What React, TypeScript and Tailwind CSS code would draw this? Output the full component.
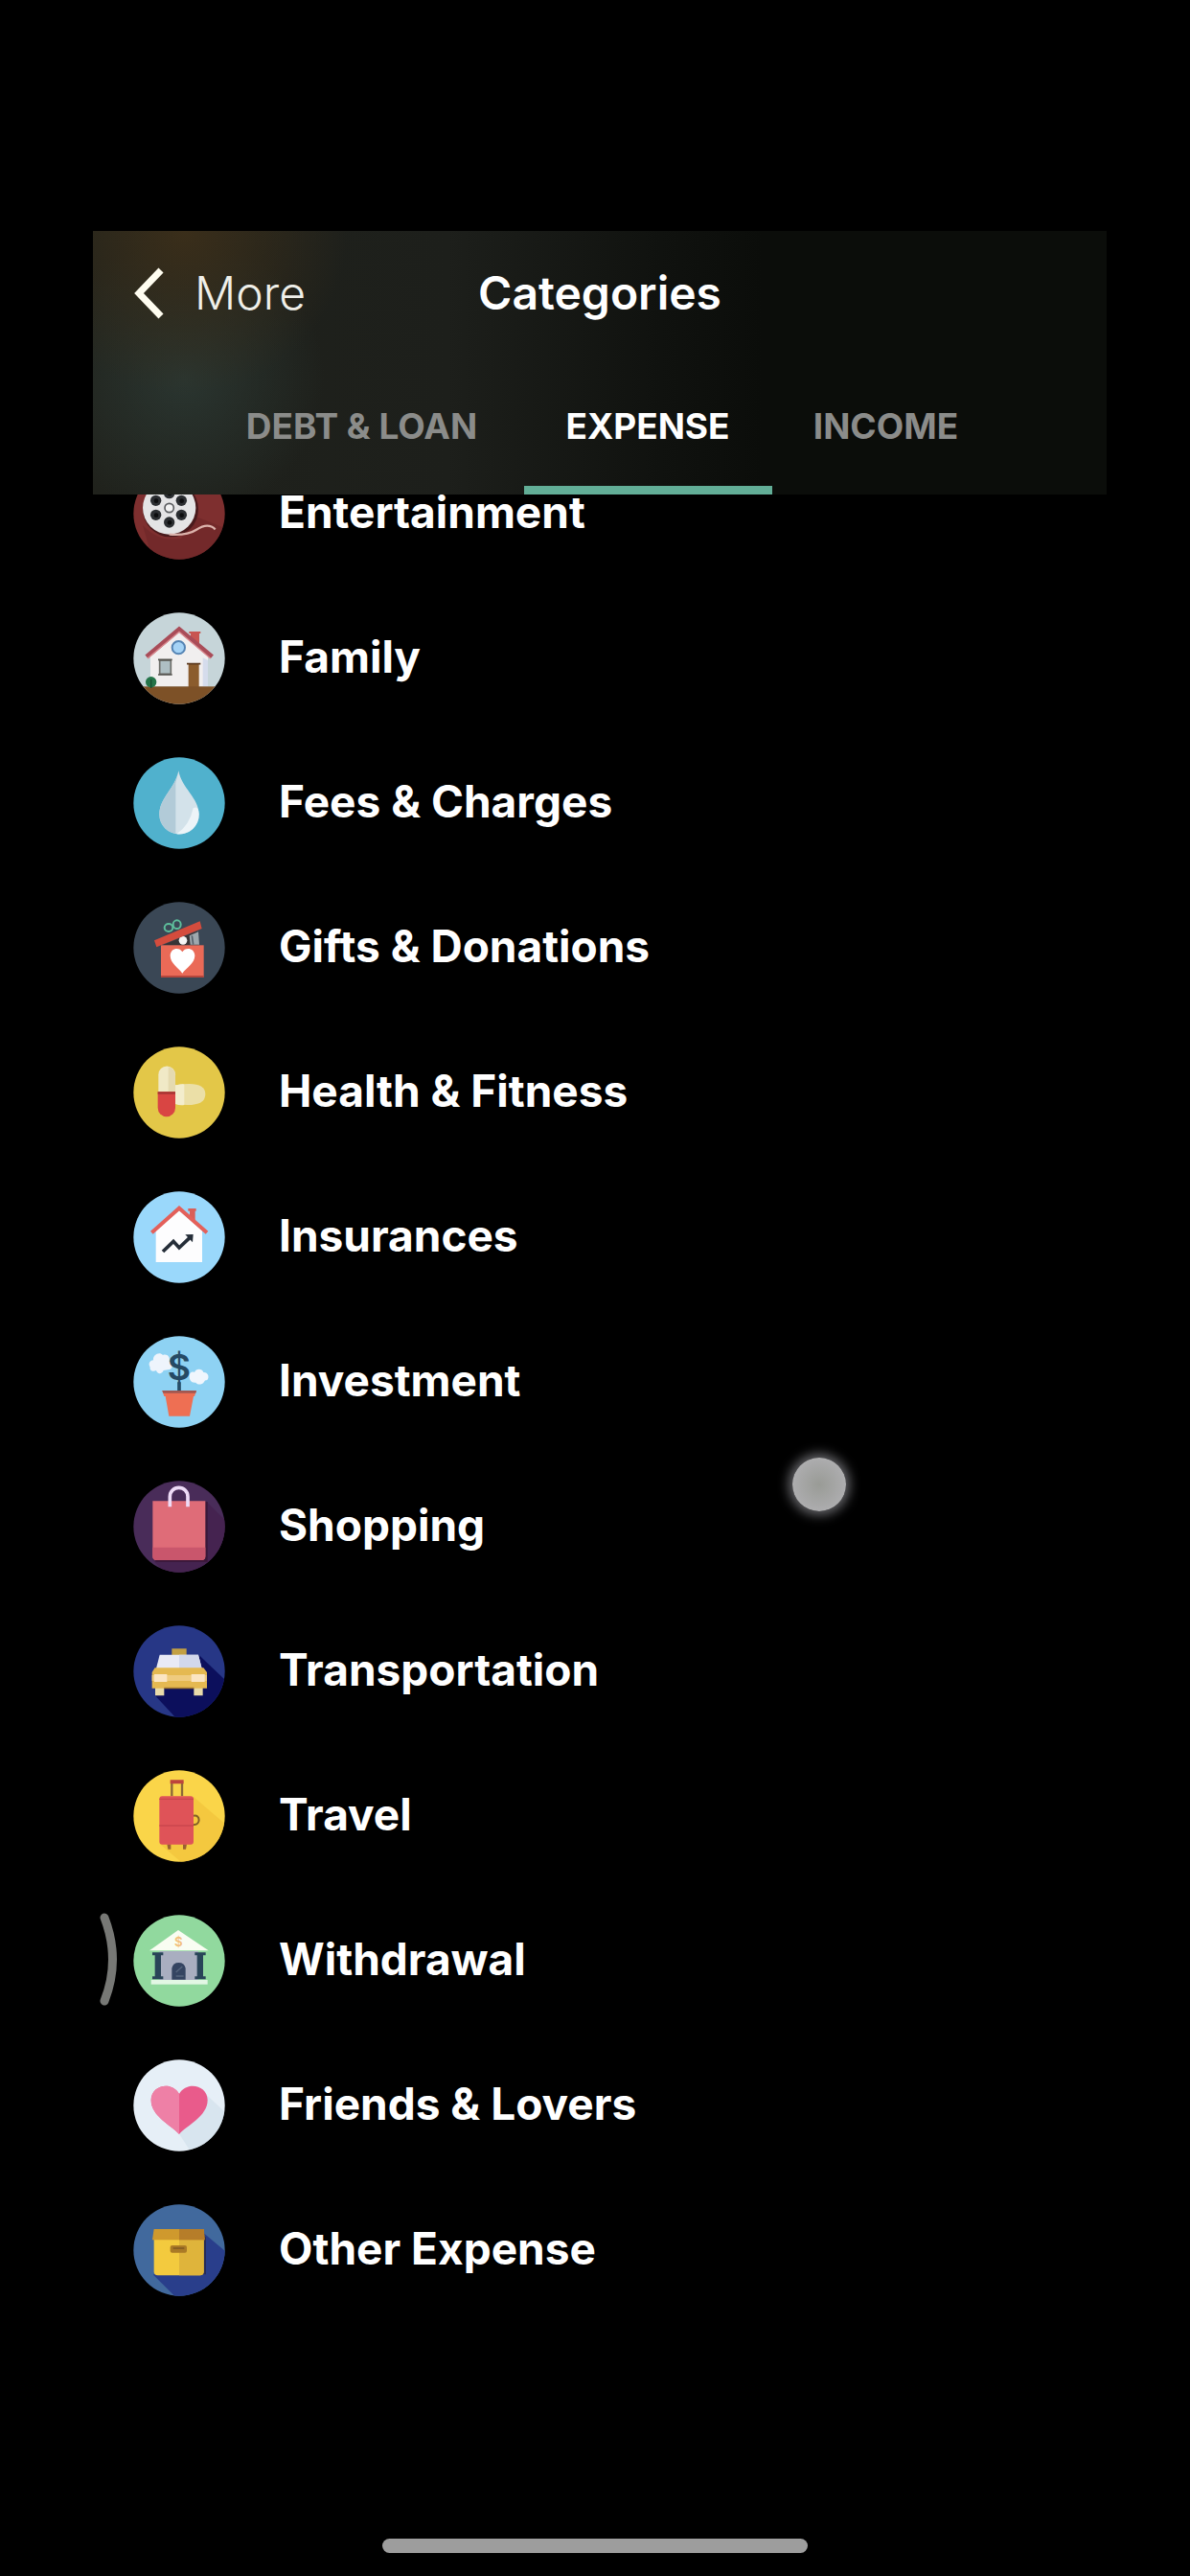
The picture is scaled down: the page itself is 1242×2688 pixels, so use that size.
import type { ReactNode } from "react";

type Category = { name: string; icon: ReactNode; edgeHint?: boolean };

function Badge({ id, bg, children }: { id: string; bg: string; children: ReactNode }) {
  return (
    <svg viewBox="0 0 288 288" className="size-24 shrink-0" aria-hidden="true">
      <clipPath id={id}>
        <circle cx="144" cy="144" r="143" />
      </clipPath>
      <g clipPath={`url(#${id})`}>
        <rect width="288" height="288" fill={bg} />
        {children}
      </g>
    </svg>
  );
}

const reelHoles = [
  [71, 103],
  [151, 103],
  [71, 148],
  [151, 148],
  [113, 171],
  [113, 80],
];

const categories: Category[] = [
  {
    name: "Entertainment",
    icon: (
      <Badge id="c-ent" bg="#7e2f2f">
        <path d="M30 180Q80 235 150 222L190 150L288 190V288H60Z" fill="#6d2728" opacity=".6" />
        <circle cx="117" cy="130" r="87" fill="#4a1a1c" />
        <circle cx="113" cy="126" r="83" fill="#e4e4e5" />
        <path d="M113 209C150 212 178 207 198 194S240 176 257 193" fill="none" stroke="#dcb3ac" strokeWidth="7" />
        {reelHoles.map(([x, y]) => (
          <g key={`${x}-${y}`}>
            <circle cx={x} cy={y} r="17" fill="#2b2e31" />
            <circle cx={x + 1} cy={y + 1} r="7" fill="#0c0d0e" />
          </g>
        ))}
        <circle cx="113" cy="126" r="14" fill="#f3f3f3" stroke="#5b5d60" strokeWidth="5" />
      </Badge>
    ),
  },
  {
    name: "Family",
    icon: (
      <Badge id="c-fam" bg="#c6d5d9">
        <path d="M180 108V66h-5v-6h36v6h-4v66z" fill="#c85551" />
        <path d="M54 232V130L144 54l90 78v100z" fill="#f1efef" />
        <path d="M234 150v82h-16v-90z" fill="#d5dcec" />
        <path d="M42 139 144 53l103 86" fill="none" stroke="#a94c58" strokeWidth="15" />
        <path d="M45 144 144 61l98 83" fill="none" stroke="#d98b90" strokeWidth="4" />
        <circle cx="142" cy="110" r="20" fill="#a5d3f6" stroke="#5584b4" strokeWidth="6" />
        <rect x="83" y="150" width="35" height="43" fill="#aebfc3" stroke="#6c6d68" strokeWidth="5" />
        <path d="M78 148h44M78 195h44" stroke="#54544f" strokeWidth="5" />
        <rect x="173" y="162" width="33" height="72" fill="#8b5c2d" />
        <path d="M168 161h43" stroke="#5d3b20" strokeWidth="5" />
        <rect y="232" width="288" height="56" fill="#7d5127" />
        <circle cx="56" cy="218" r="17" fill="#247449" />
        <path d="M56 210v27" stroke="#174d31" strokeWidth="4" />
      </Badge>
    ),
  },
  {
    name: "Fees & Charges",
    icon: (
      <Badge id="c-fee" bg="#50b1cd">
        <path d="M142 43C152 98 206 128 206 180A62 61 0 0 1 82 180C82 128 132 98 142 43Z" fill="#d3e2ea" />
        <path d="M142 43C132 98 82 128 82 180A62 61 0 0 0 133 240V82Z" fill="#b2cbd8" />
        <path d="M206 178A62 61 0 0 1 136 241Q176 215 188 160Q205 150 206 178Z" fill="#edf4f8" />
      </Badge>
    ),
  },
  {
    name: "Gifts & Donations",
    icon: (
      <Badge id="c-gift" bg="#3a4755">
        <path d="M92 136 200 92l6 44z" fill="#383436" />
        <path d="m176 106 28-12 3 40h-28z" fill="#9ea8ae" />
        <path d="m184 106 4 28" stroke="#56616b" strokeWidth="5" />
        <circle cx="156" cy="121" r="13" fill="#f5f5f5" />
        <rect x="87" y="136" width="134" height="100" fill="#ea6a57" />
        <path d="M87 234h134" stroke="#b5463c" strokeWidth="6" />
        <path d="m66 121 143-60 6 23-142 58z" fill="#d44c3d" />
        <ellipse cx="111" cy="81" rx="13" ry="12" fill="none" stroke="#5dbd9b" strokeWidth="6" />
        <ellipse cx="137" cy="71" rx="12" ry="13" fill="none" stroke="#5dbd9b" strokeWidth="6" />
        <path d="M154 224C142 207 116 193 116 169C116 144 145 140 154 157C163 140 193 144 193 169C193 193 166 207 154 224Z" fill="#fff" />
      </Badge>
    ),
  },
  {
    name: "Health & Fitness",
    icon: (
      <Badge id="c-health" bg="#e3c748">
        <path d="M132 121Q226 105 226 149T132 180Z" fill="#ebdfa7" />
        <path d="M132 121Q160 115 160 119V183Q145 185 132 180Z" fill="#f3edcc" />
        <path d="M79 142V88a26 26 0 0 1 53 0v54z" fill="#f0e9c6" />
        <path d="M110 142V64a26 26 0 0 1 22 24v54z" fill="#e5dab0" />
        <path d="M77 142h55v50a27 27 0 0 1-55 0z" fill="#d94543" />
        <path d="M77 142h55v7H77z" fill="#a93534" />
      </Badge>
    ),
  },
  {
    name: "Insurances",
    icon: (
      <Badge id="c-ins" bg="#9ad8fb">
        <path d="M177 90V62h-5v-8h25v8h-3v45z" fill="#d95f59" />
        <path d="M71 222V124l73-64 72 64v98z" fill="#fdfdfe" />
        <path d="m58 130 86-77 87 77" fill="none" stroke="#e3605a" strokeWidth="12" />
        <path d="m93 189 33-32 18 20 36-34" fill="none" stroke="#252e39" strokeWidth="11" />
        <path d="m163 136 25-1-2 25z" fill="#252e39" />
      </Badge>
    ),
  },
  {
    name: "Investment",
    icon: (
      <Badge id="c-inv" bg="#8ed2f3">
        <path d="M53 98c-8-13 2-22 10-22-2-18 20-28 30-16 14-5 24 7 20 20 14 4 12 26-4 26l-14 2c-5 13-20 12-23 0-10 6-21 0-19-10z" fill="#eef4fc" />
        <path d="M176 127c0-14 10-16 16-13 5-14 24-12 28 0 14-1 20 14 12 24-8 1-8 3-12 9-10 7-20 5-24-1-14 2-20-7-20-19z" fill="#f0f6fd" />
        <path d="M144 145v30" stroke="#264e68" strokeWidth="11" />
        <text x="144" y="139" textAnchor="middle" fontFamily="Inter, sans-serif" fontWeight="600" fontSize="112" fill="#264a64">$</text>
        <path d="M91 171h107l-6 18h-3l-12 62h-65L101 189h-4z" fill="#ee6f53" />
        <path d="M91 171h107l-2 8H94z" fill="#a25750" />
      </Badge>
    ),
  },
  {
    name: "Shopping",
    icon: (
      <Badge id="c-shop" bg="#492c59">
        <path d="m226 62 62 62v164H100L61 248z" fill="#452350" />
        <path d="M226 66h7v188H70v-8z" fill="#3a1738" />
        <path d="M61 64h165v173q0 12-12 12H73q-12 0-12-12z" fill="#df6c78" />
        <path d="M61 209h165v28q0 12-12 12H73q-12 0-12-12z" fill="#c9566c" />
        <path d="M115 82V50a28 28 0 0 1 56 0v32" fill="none" stroke="#eedbf7" strokeWidth="11" />
      </Badge>
    ),
  },
  {
    name: "Transportation",
    icon: (
      <Badge id="c-taxi" bg="#273786">
        <path d="m206 93 82 78v117H132L68 219z" fill="#0c0f5c" />
        <path d="M121 73h46v22h-46z" fill="#c3a043" />
        <path d="M83 92h121l11 43H72z" fill="#e9eaf5" />
        <path d="M144 92h60l11 43h-71z" fill="#d2d8ec" />
        <path d="M69 190h28v30H69zm121 0h28v30h-28z" fill="#e9dbaa" />
        <path d="M68 133h152l11 14v50H59v-50z" fill="#e5b951" />
        <path d="M59 156h172v18H59z" fill="#efcb7f" />
        <path d="M66 153h40v24H66zm116 0h42v24h-42z" fill="#fbe5c3" />
        <path d="M97 194h93v5H97z" fill="#a17831" />
      </Badge>
    ),
  },
  {
    name: "Travel",
    icon: (
      <Badge id="c-travel" bg="#fad549">
        <path d="m189 84 99 85v119H150l-64-55z" fill="#f1c33c" opacity=".75" />
        <path d="M121 82V38m32 44V38" stroke="#8c6738" strokeWidth="7" />
        <path d="M116 37h42" stroke="#bd443c" strokeWidth="12" />
        <path d="M189 143c22-6 23 31 0 28" fill="none" stroke="#826027" strokeWidth="6" />
        <path d="M106 232h12v16h-9zm50 0h12l-3 16h-9z" fill="#9b6031" />
        <rect x="82" y="82" width="107" height="151" rx="9" fill="#df5358" />
        <path d="M82 174h107M82 91h107" stroke="#ca474d" strokeWidth="4" />
      </Badge>
    ),
  },
  {
    name: "Withdrawal",
    edgeHint: true,
    icon: (
      <Badge id="c-bank" bg="#91d99e">
        <path d="m141 48 95 64H51z" fill="#f9fdf2" />
        <text x="142" y="99" textAnchor="middle" fontFamily="Inter, sans-serif" fontWeight="600" fontSize="40" fill="#f2bf7a">$</text>
        <rect x="82" y="114" width="122" height="90" fill="#a9aec0" />
        <path d="M60 118h34v9h-7v66h7v9H60v-9h8v-66h-8zm133 0h34v9h-8v66h8v9h-34v-9h7v-66h-7z" fill="#294458" />
        <path d="M121 203v-36a22 22 0 0 1 43 0v36z" fill="#344461" />
        <path d="m134 180 20-18m-20 30h24" stroke="#56657d" strokeWidth="4" />
        <rect x="56" y="204" width="177" height="14" fill="#e2f7e4" />
      </Badge>
    ),
  },
  {
    name: "Friends & Lovers",
    icon: (
      <Badge id="c-heart" bg="#e6eff7">
        <path d="m229 110 59 55v123H180l-36-55z" fill="#cfdde9" opacity=".6" />
        <path d="M144 234C121 207 56 179 56 127C56 80 121 66 144 108C167 66 233 80 233 127C233 179 167 207 144 234Z" fill="#e95b8b" />
        <path d="M144 234C121 207 56 179 56 127C56 80 121 66 144 108Z" fill="#ee80a6" />
      </Badge>
    ),
  },
  {
    name: "Other Expense",
    icon: (
      <Badge id="c-box" bg="#41699d">
        <path d="m223 92 65 55v141H130l-67-67z" fill="#293e8b" />
        <path d="M70 220h158V104l-8-8z" fill="#252b58" />
        <path d="M65 106h156v105q0 12-12 12H77q-12 0-12-12z" fill="#f3ca3e" />
        <path d="M144 106h77v105q0 12-12 12h-65z" fill="#dfb43b" />
        <path d="M65 78h156l3 34H60z" fill="#cf992d" />
        <path d="M144 78h77l3 34h-80z" fill="#b67d29" />
        <rect x="116" y="129" width="52" height="23" rx="6" fill="#aa7a26" />
        <path d="M125 138h35" stroke="#7e5822" strokeWidth="5" />
      </Badge>
    ),
  },
];

const tabs = ["DEBT & LOAN", "EXPENSE", "INCOME"];

export default function App() {
  return (
    <div className="relative flex min-h-screen flex-col bg-black pt-[241px] font-['Inter',sans-serif] text-white">
      <main className="mr-[87px] ml-[97px] flex flex-1 flex-col">
        <header className="bg-[radial-gradient(circle_at_9%_0%,#3a2e1a_0%,#3a2e1a00_17%),radial-gradient(circle_at_9%_56%,#2d3a35cc_0%,#2d3a3500_15%),linear-gradient(90deg,#20221c_0%,#1d1f1b_35%,#10120f_56%,#0b0d0a_66%)]">
          <div className="grid h-[130px] grid-cols-[1fr_auto_1fr] items-center">
            <button type="button" className="flex items-center gap-8 justify-self-start pl-[42px] text-[48px] leading-none font-light text-[#efefe9]">
              <svg viewBox="0 0 32 54" className="h-[54px] w-8" fill="none" stroke="#fffdf0" strokeWidth="7" aria-hidden="true">
                <path d="M29 3 6 27l23 24" />
              </svg>
              More
            </button>
            <h1 className="text-[48px] leading-none font-semibold">Categories</h1>
          </div>
          <div role="tablist" className="grid h-[145px] grid-cols-[338px_259px_238px] justify-center">
            {tabs.map((tab) => (
              <button
                key={tab}
                type="button"
                role="tab"
                aria-selected={tab === "EXPENSE"}
                className={
                  tab === "EXPENSE"
                    ? "border-b-[9px] border-[#62ae97] pt-3 text-[37px] font-bold text-white"
                    : "border-b-[9px] border-transparent pt-3 text-[37px] font-bold text-[#8b8c8a]"
                }
              >
                {tab}
              </button>
            ))}
          </div>
        </header>

        <div className="overflow-hidden">
          <ul className="-mt-14">
            {categories.map((category) => (
              <li key={category.name} className="relative">
                {category.edgeHint && (
                  <svg viewBox="0 0 24 98" className="absolute top-[26px] left-1 h-[98px] w-6" fill="none" stroke="#777875" strokeWidth="9" strokeLinecap="round" aria-hidden="true">
                    <path d="M8 5Q25 49 8 92" />
                  </svg>
                )}
                <button type="button" className="flex h-[151px] w-full items-center gap-14 pl-[42px] text-left text-[46px] leading-none font-bold">
                  {category.icon}
                  <span className="pb-1">{category.name}</span>
                </button>
              </li>
            ))}
          </ul>
        </div>
      </main>

      <div className="absolute top-[1521px] left-[827px] size-14 rounded-full bg-[radial-gradient(circle,#999b96_0%,#aaaaab_60%,#b8b8bb_100%)] shadow-[0_0_12px_4px_#66666a]" />
      <footer className="flex justify-center pb-6">
        <div className="h-[15px] w-[444px] rounded-full bg-[#9d9d9d]" />
      </footer>
    </div>
  );
}
